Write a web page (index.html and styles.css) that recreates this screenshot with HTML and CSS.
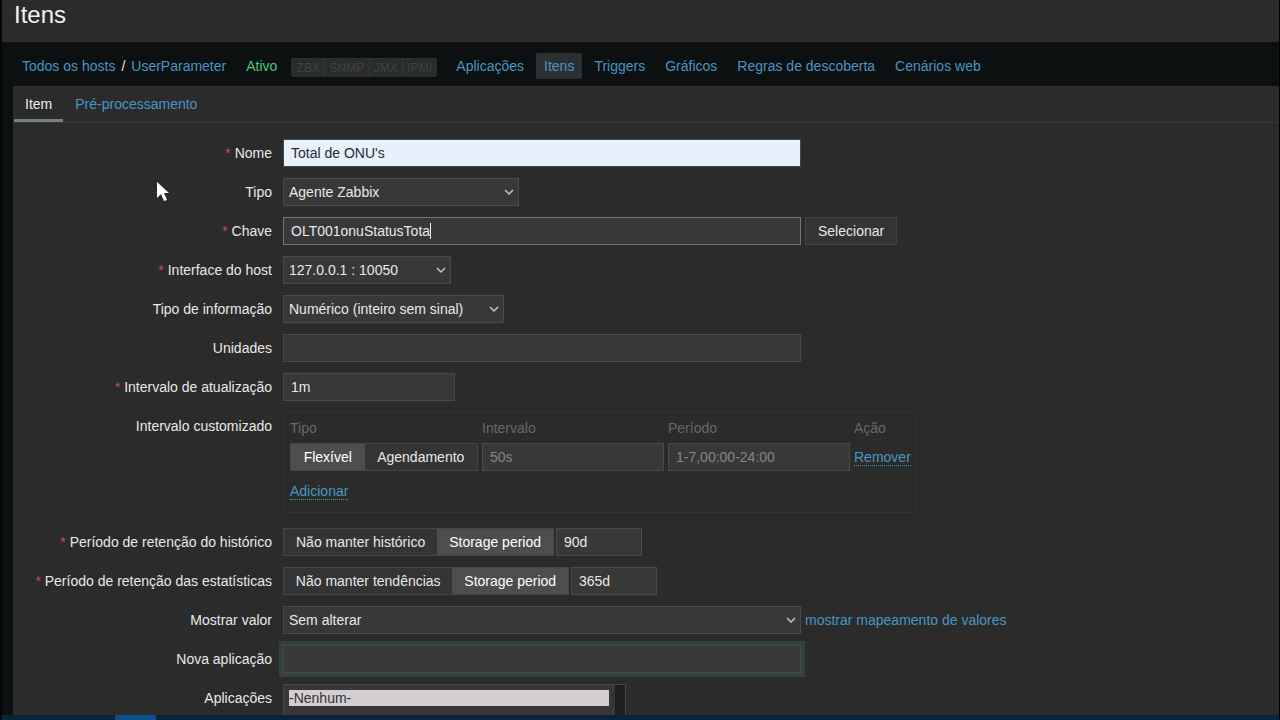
FILE: index.html
```
<!DOCTYPE html>
<html lang="pt-BR">

<head>
    <meta charset="UTF-8">
    <meta name="viewport" content="width=device-width, initial-scale=1.0">
    <title>Configuração de itens</title>
    <link rel="stylesheet" href="styles.css">
</head>

<body>

    <div class="page">
        <header>
            <h1>Itens</h1>
        </header>

        <nav class="host-nav">
            <div class="breadcrumb">
                <a href="#">Todos os hosts</a>
                <span>/</span>
                <a href="#">UserParameter</a>
            </div>
            <span class="status">Ativo</span>
            <div class="interfaces">
                <span>ZBX</span><span>SNMP</span><span>JMX</span><span>IPMI</span>
            </div>
            <div class="links">
                <a href="#">Aplicações</a>
                <a href="#" class="selected">Itens</a>
                <a href="#">Triggers</a>
                <a href="#">Gráficos</a>
                <a href="#">Regras de descoberta</a>
                <a href="#">Cenários web</a>
            </div>
        </nav>

        <main>
            <div class="tabs">
                <a href="#" class="active">Item</a>
                <a href="#">Pré-processamento</a>
            </div>

            <form>
                <label class="name required" for="nome">Nome</label>
                <div class="field">
                    <input type="text" id="nome" class="wide autofill" value="Total de ONU's">
                </div>

                <label class="name" for="tipo">Tipo</label>
                <div class="field">
                    <span class="select w-type">
                        <select id="tipo"><option>Agente Zabbix</option></select>
                        <svg viewBox="0 0 10 6"><path d="M1 1l4 4 4-4"/></svg>
                    </span>
                </div>

                <label class="name required" for="chave">Chave</label>
                <div class="field">
                    <span class="key">
                        <input type="text" id="chave" class="wide focused" value="OLT001onuStatusTota">
                        <i class="caret"></i>
                    </span>
                    <button type="button">Selecionar</button>
                </div>

                <label class="name required" for="interface">Interface do host</label>
                <div class="field">
                    <span class="select w-host">
                        <select id="interface"><option>127.0.0.1 : 10050</option></select>
                        <svg viewBox="0 0 10 6"><path d="M1 1l4 4 4-4"/></svg>
                    </span>
                </div>

                <label class="name" for="info">Tipo de informação</label>
                <div class="field">
                    <span class="select w-info">
                        <select id="info"><option>Numérico (inteiro sem sinal)</option></select>
                        <svg viewBox="0 0 10 6"><path d="M1 1l4 4 4-4"/></svg>
                    </span>
                </div>

                <label class="name" for="unidades">Unidades</label>
                <div class="field">
                    <input type="text" id="unidades" class="wide">
                </div>

                <label class="name required" for="intervalo">Intervalo de atualização</label>
                <div class="field">
                    <input type="text" id="intervalo" class="medium" value="1m">
                </div>

                <span class="name">Intervalo customizado</span>
                <div class="field">
                    <div class="custom">
                        <table>
                            <thead>
                                <tr>
                                    <th>Tipo</th>
                                    <th>Intervalo</th>
                                    <th>Período</th>
                                    <th>Ação</th>
                                </tr>
                            </thead>
                            <tbody>
                                <tr>
                                    <td>
                                        <div class="segmented w-custom">
                                            <input type="radio" name="flex" id="flex0" checked><label for="flex0">Flexível</label>
                                            <input type="radio" name="flex" id="flex1"><label for="flex1">Agendamento</label>
                                        </div>
                                    </td>
                                    <td><input type="text" class="cell" placeholder="50s" aria-label="Intervalo"></td>
                                    <td><input type="text" class="cell" placeholder="1-7,00:00-24:00" aria-label="Período"></td>
                                    <td><a href="#" class="action">Remover</a></td>
                                </tr>
                            </tbody>
                        </table>
                        <a href="#" class="action">Adicionar</a>
                    </div>
                </div>

                <label class="name required" for="historico">Período de retenção do histórico</label>
                <div class="field">
                    <div class="segmented w-history">
                        <input type="radio" name="hist" id="hist0"><label for="hist0">Não manter histórico</label>
                        <input type="radio" name="hist" id="hist1" checked><label for="hist1">Storage period</label>
                    </div>
                    <input type="text" id="historico" class="small" value="90d">
                </div>

                <label class="name required" for="estatisticas">Período de retenção das estatísticas</label>
                <div class="field">
                    <div class="segmented w-trends">
                        <input type="radio" name="trend" id="trend0"><label for="trend0">Não manter tendências</label>
                        <input type="radio" name="trend" id="trend1" checked><label for="trend1">Storage period</label>
                    </div>
                    <input type="text" id="estatisticas" class="small" value="365d">
                </div>

                <label class="name" for="mostrar">Mostrar valor</label>
                <div class="field">
                    <span class="select wide">
                        <select id="mostrar"><option>Sem alterar</option></select>
                        <svg viewBox="0 0 10 6"><path d="M1 1l4 4 4-4"/></svg>
                    </span>
                    <a href="#">mostrar mapeamento de valores</a>
                </div>

                <label class="name" for="nova">Nova aplicação</label>
                <div class="field">
                    <input type="text" id="nova" class="wide new-app">
                </div>

                <label class="name" for="aplicacoes">Aplicações</label>
                <div class="field">
                    <div class="listbox">
                        <select id="aplicacoes" multiple size="6">
                            <option selected>-Nenhum-</option>
                        </select>
                    </div>
                </div>
            </form>
        </main>
    </div>

    <div class="taskbar"><span></span></div>

    <svg class="pointer" viewBox="0 0 13 21"><path d="M1 1v16l4-4 3 7 3-1-3-7h5z"/></svg>

</body>

</html>
```
FILE: styles.css
```
* {
    box-sizing: border-box;
}

body {
    display: flex;
    flex-direction: column;
    height: 100vh;
    margin: 0;
    background-color: #0d1011;
    border-left: 2px solid #050505;
    border-right: 1px solid #000;
    color: #e8e8e8;
    font-family: Arial, "Liberation Sans", sans-serif;
    font-size: 14px;
    line-height: 16px;
}

a {
    color: #4796c4;
    text-decoration: none;
}

input,
select,
button {
    font: inherit;
    color: inherit;
}

.page {
    flex: 1;
    min-height: 0;
    overflow-y: auto;
    scrollbar-width: none;
}

header {
    height: 42px;
    padding: 2px 12px;
    background-color: #2b2b2b;
}

h1 {
    margin: 0;
    font-size: 24px;
    font-weight: normal;
    line-height: 26px;
    color: #f2f2f2;
}

/* host navigation */
.host-nav {
    display: flex;
    align-items: center;
    height: 44px;
    padding: 4px 20px 0;
    white-space: nowrap;
}

.breadcrumb {
    display: flex;
    gap: 6px;
}

.status {
    margin-left: 20px;
    color: #3dcf78;
}

.interfaces {
    display: flex;
    width: 146px;
    height: 19px;
    margin: 2px 0 0 14px;
    border: 1px solid #2c2f30;
    border-radius: 2px;
    background-color: #292b2c;
    color: #414445;
    font-size: 12px;
    line-height: 18px;
}

.interfaces span {
    flex: auto;
    text-align: center;
}

.interfaces span + span {
    border-left: 1px solid #353838;
}

.links {
    display: flex;
    gap: 4px;
    margin-left: 11px;
}

.links a {
    padding: 5px 8px;
    border-radius: 2px;
}

.links .selected {
    background-color: #2d3032;
}

/* form */
main {
    margin-left: 11px;
    padding-bottom: 20px;
    background-color: #2b2b2b;
}

.tabs {
    display: flex;
    height: 37px;
    border-bottom: 1px solid #383838;
}

.tabs a {
    margin-left: 1px;
    padding: 10px 11px;
}

.tabs .active {
    border-bottom: 3px solid #738184;
    color: #f0f0f0;
}

form {
    display: grid;
    grid-template-columns: 259px 1fr;
    gap: 11px;
    padding-top: 16px;
}

.name {
    padding: 6px 0;
    text-align: right;
    white-space: nowrap;
}

.required::before {
    content: "* ";
    color: #c3505b;
}

.field {
    display: flex;
    align-items: center;
    gap: 4px;
}

input[type=text],
.select select,
button {
    height: 28px;
    border: 1px solid #4a4a4a;
    border-radius: 0;
    background-color: #383838;
    outline: none;
}

input[type=text] {
    padding: 0 7px;
}

input::placeholder {
    color: #858585;
}

button {
    padding: 0 12px;
    background-color: #343434;
    border-color: #424242;
}

.wide {
    width: 518px;
}

.medium {
    width: 172px;
}

.small {
    width: 86px;
}

input.autofill {
    border-color: #45484b;
    background-color: #e8f0fc;
    color: #2b2b30;
}

input.focused {
    border-color: #747675;
}

input.new-app {
    border-color: #405048;
    box-shadow: 0 0 0 4px #33403b;
}

.key {
    position: relative;
}

.key input {
    display: block;
}

.caret {
    position: absolute;
    top: 6px;
    left: 147px;
    width: 1px;
    height: 16px;
    background-color: #f0f0f0;
}

.select {
    position: relative;
    display: block;
}

.select select {
    appearance: none;
    width: 100%;
    padding: 0 5px;
}

.select svg {
    position: absolute;
    top: 11px;
    right: 5px;
    width: 10px;
    height: 6px;
    fill: none;
    stroke: #c4c4c4;
    stroke-width: 1.5;
    pointer-events: none;
}

.w-type {
    width: 236px;
}

.w-host {
    width: 168px;
}

.w-info {
    width: 221px;
}

.segmented {
    display: flex;
    height: 28px;
    border: 1px solid #464646;
    background-color: #343434;
    white-space: nowrap;
}

.segmented input {
    position: absolute;
    opacity: 0;
}

.segmented label {
    flex: auto;
    line-height: 26px;
    text-align: center;
}

.segmented input:checked + label {
    background-color: #4d4d4d;
    color: #fff;
}

.w-custom {
    width: 188px;
}

.w-history {
    width: 271px;
}

.w-trends {
    width: 286px;
}

.field .segmented + input {
    margin-left: -2px;
}

.custom {
    width: 634px;
    height: 101px;
    margin-bottom: 4px;
    padding: 6px;
    border: 1px solid #323434;
}

table {
    border-collapse: collapse;
    margin-bottom: 12px;
}

th,
td {
    padding: 0 4px 0 0;
    text-align: left;
}

th {
    height: 24px;
    padding-bottom: 6px;
    color: #686868;
    font-weight: normal;
}

td:last-child,
th:last-child {
    padding-right: 0;
}

.cell {
    display: block;
    width: 182px;
}

.action {
    border-bottom: 1px dotted #4796c4;
}

.listbox {
    width: 343px;
    padding: 5px 16px 5px 5px;
    border: 1px solid #484848;
    background: linear-gradient(to left, #1e1e1e 10px, #383638 10px);
}

.listbox select {
    display: block;
    width: 100%;
    padding: 0;
    border: none;
    border-radius: 0;
    background: none;
    outline: none;
}

.listbox option {
    min-height: 16px;
    padding: 0;
    border-radius: 0;
}

.listbox option:checked {
    background: linear-gradient(#d2ced2, #d2ced2);
    color: #333;
}

/* bottom bar */
.taskbar {
    flex: none;
    height: 5px;
    padding-left: 113px;
    background-color: #0a2538;
}

.taskbar span {
    display: block;
    width: 41px;
    height: 100%;
    background-color: #0c4f8c;
}

.pointer {
    position: absolute;
    top: 181px;
    left: 156px;
    width: 13px;
    height: 21px;
    fill: #fff;
}
```
